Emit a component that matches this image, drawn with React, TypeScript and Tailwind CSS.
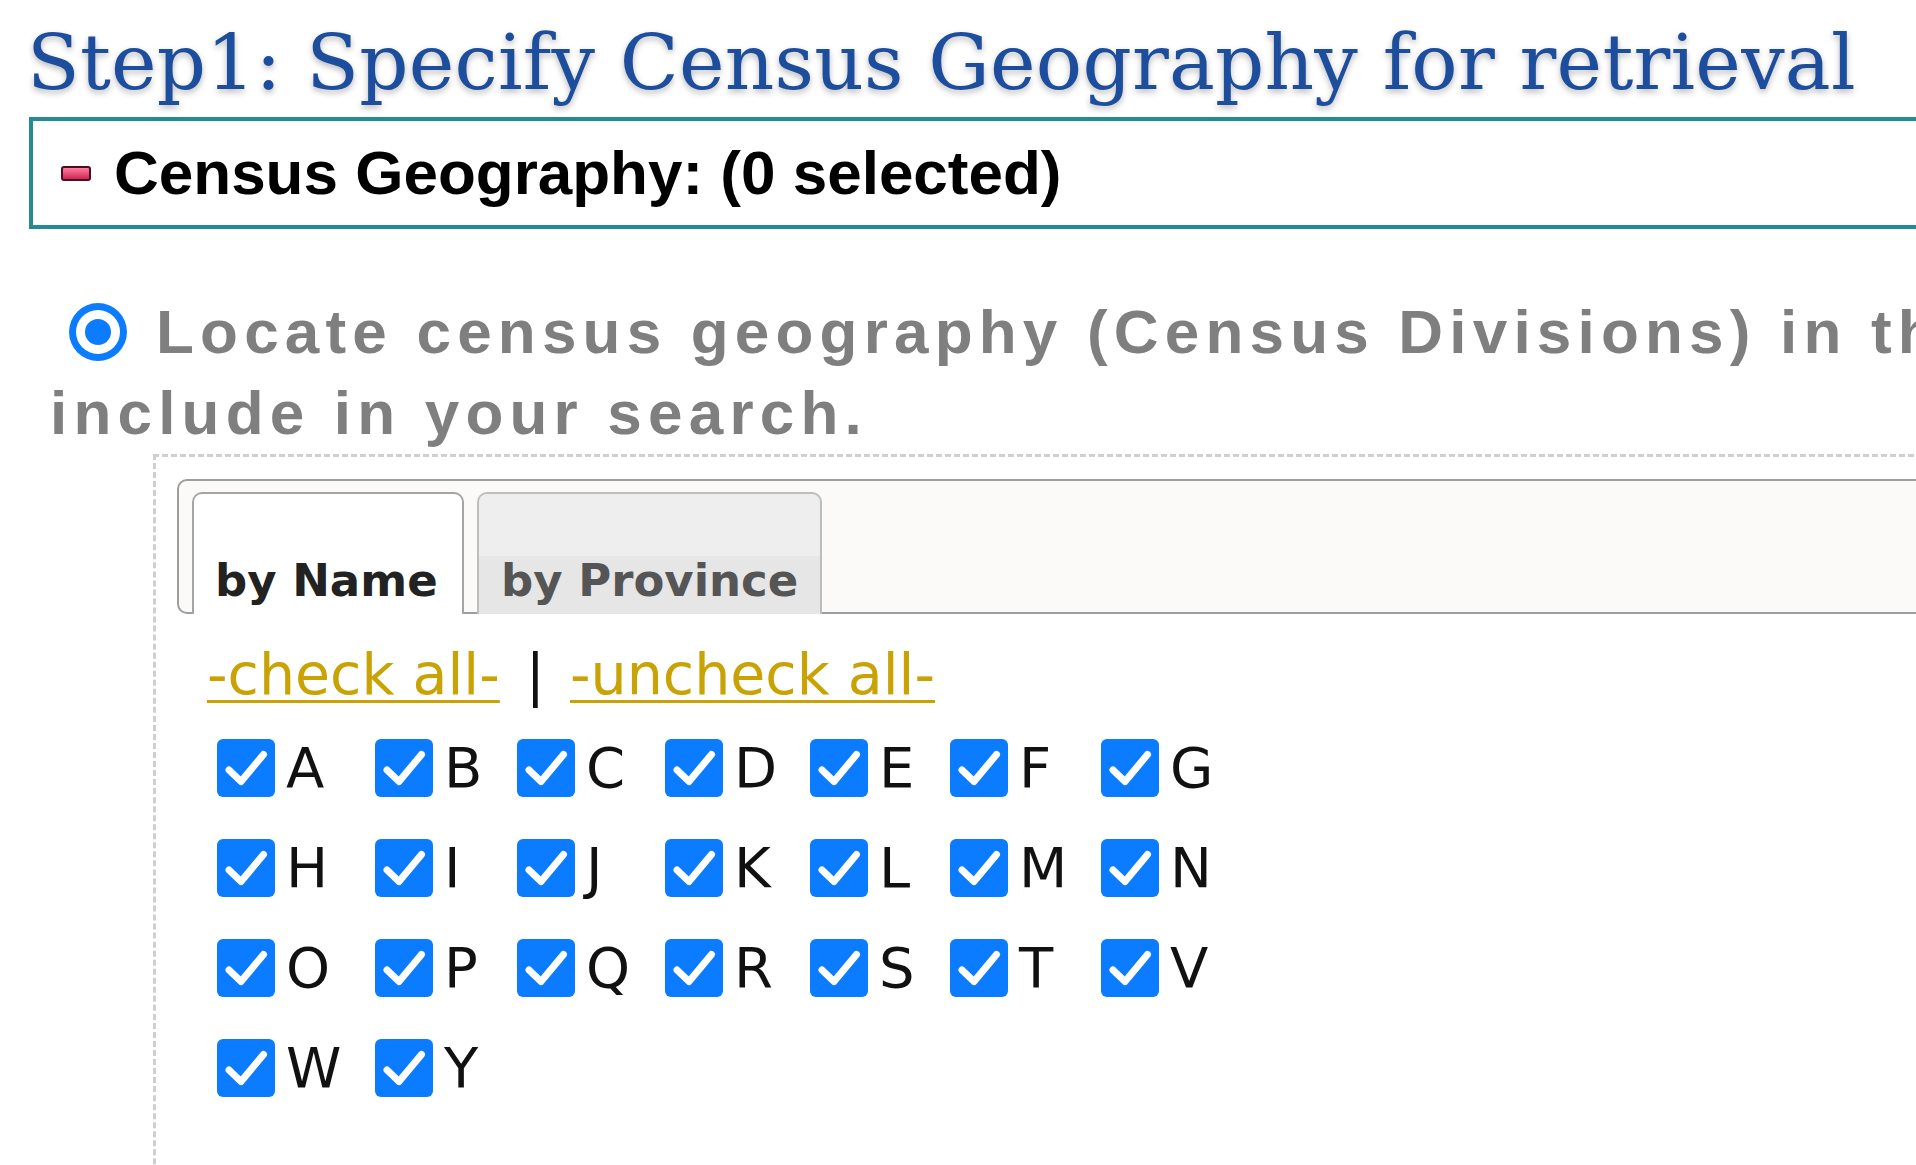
import React from "react";

const rows: string[][] = [
  ["A", "B", "C", "D", "E", "F", "G"],
  ["H", "I", "J", "K", "L", "M", "N"],
  ["O", "P", "Q", "R", "S", "T", "V"],
  ["W", "Y"],
];

function CheckBox() {
  return (
    <span className="inline-flex w-[58px] h-[58px] shrink-0 rounded-[6px] bg-[#0b7bff] items-center justify-center">
      <svg width="58" height="58" viewBox="0 0 58 58">
        <path
          d="M12 31 L24 42.5 L46.5 15.5"
          fill="none"
          stroke="#ffffff"
          strokeWidth="7"
          strokeLinecap="round"
          strokeLinejoin="round"
        />
      </svg>
    </span>
  );
}

function Radio() {
  return (
    <span className="inline-block w-[58px] h-[58px] align-[-8px] ml-[19px] mr-[29px]">
      <svg width="58" height="58" viewBox="0 0 58 58">
        <circle cx="29" cy="29" r="29" fill="#0b7bff" />
        <circle cx="29" cy="29" r="22" fill="#ffffff" />
        <circle cx="29" cy="29" r="13" fill="#0b7bff" />
      </svg>
    </span>
  );
}

export default function App() {
  return (
    <div className="w-[1916px] h-[1165px] overflow-hidden bg-white relative">
      {/* Title */}
      <div
        className="pt-[24px] pl-[27px] whitespace-nowrap text-[77px] leading-[77px] tracking-[0.2px] text-[#1d4e9e] [text-shadow:0_3px_6px_rgba(0,0,0,0.28)]"
        style={{ fontFamily: '"DejaVu Serif", "Liberation Serif", serif' }}
      >
        Step1: Specify Census Geography for retrieval
      </div>

      {/* Census Geography box */}
      <div className="mt-[16px] ml-[29px] w-[2400px] h-[112px] border-[4px] border-[#238b91] flex items-center pl-[28px]">
        <span className="w-[30px] h-[15px] rounded-[3px] border-[2px] border-[#4e0d1e] bg-[linear-gradient(#ff7c9c,#d42456)] shrink-0" />
        <span
          className="ml-[23px] whitespace-nowrap text-[62px] leading-[62px] font-bold text-black"
          style={{ fontFamily: '"Liberation Sans", Arial, sans-serif' }}
        >
          Census Geography: (0 selected)
        </span>
      </div>

      {/* Locate paragraph */}
      <div
        className="mt-[62px] pl-[50px] whitespace-nowrap text-[62px] leading-[81px] font-bold tracking-[6.2px] text-[#7f7f7f]"
        style={{ fontFamily: '"Liberation Sans", Arial, sans-serif' }}
      >
        <Radio />
        Locate census geography (Census Divisions) in the list below that you want to
        <br />
        include in your search.
      </div>

      {/* Dashed container */}
      <div className="mt-[1px] ml-[153px] w-[2400px] h-[900px] border-[3px] border-dashed border-[#cfcfcf]">
        {/* Tab bar */}
        <div
          className="mt-[22px] ml-[21px] w-[2400px] h-[135px] border-[2px] border-[#9e9e9e] rounded-[10px] bg-[#fcfaf9] pt-[11px] pl-[13px] flex items-end gap-[13px]"
          style={{ fontFamily: '"DejaVu Sans", Verdana, sans-serif' }}
        >
          <div className="relative -mb-[2px] w-[272px] h-[122px] border-[2px] border-b-0 border-[#a4a4a4] rounded-t-[10px] bg-white pt-[64px] pl-[21px] text-[45px] leading-[45px] font-bold text-[#222222] whitespace-nowrap">
            by Name
          </div>
          <div className="relative -mb-[2px] w-[345px] h-[122px] border-[2px] border-b-0 border-[#bdbdbd] rounded-t-[10px] bg-[linear-gradient(#eeeeee_0%,#eeeeee_52%,#e6e6e6_52%,#e6e6e6_100%)] pt-[64px] pl-[22px] text-[45px] leading-[45px] font-bold text-[#555555] whitespace-nowrap">
            by Province
          </div>
        </div>

        {/* Links */}
        <div
          className="mt-[32px] pl-[51px] text-[57px] leading-[57px] whitespace-nowrap flex items-baseline"
          style={{ fontFamily: '"DejaVu Sans", Verdana, sans-serif' }}
        >
          <a className="text-[#c9a204] underline decoration-[3px] underline-offset-[6px]">-check all-</a>
          <span className="ml-[26px] mr-[25px] text-[#111111]">|</span>
          <a className="text-[#c9a204] underline decoration-[3px] underline-offset-[6px]">-uncheck all-</a>
        </div>

        {/* Checkbox grid */}
        <div
          className="mt-[15px] pl-[61px] grid grid-cols-[158px_142px_148px_145px_140px_151px_auto] auto-rows-[100px] items-center justify-start"
          style={{ fontFamily: '"DejaVu Sans", Verdana, sans-serif' }}
        >
          {rows.map((row, ri) =>
            row.map((l) => (
              <div key={`${ri}-${l}`} className="flex items-center">
                <CheckBox />
                <span className="ml-[11px] text-[56px] leading-[56px] text-[#111111]">{l}</span>
              </div>
            ))
          )}
        </div>
      </div>
    </div>
  );
}
